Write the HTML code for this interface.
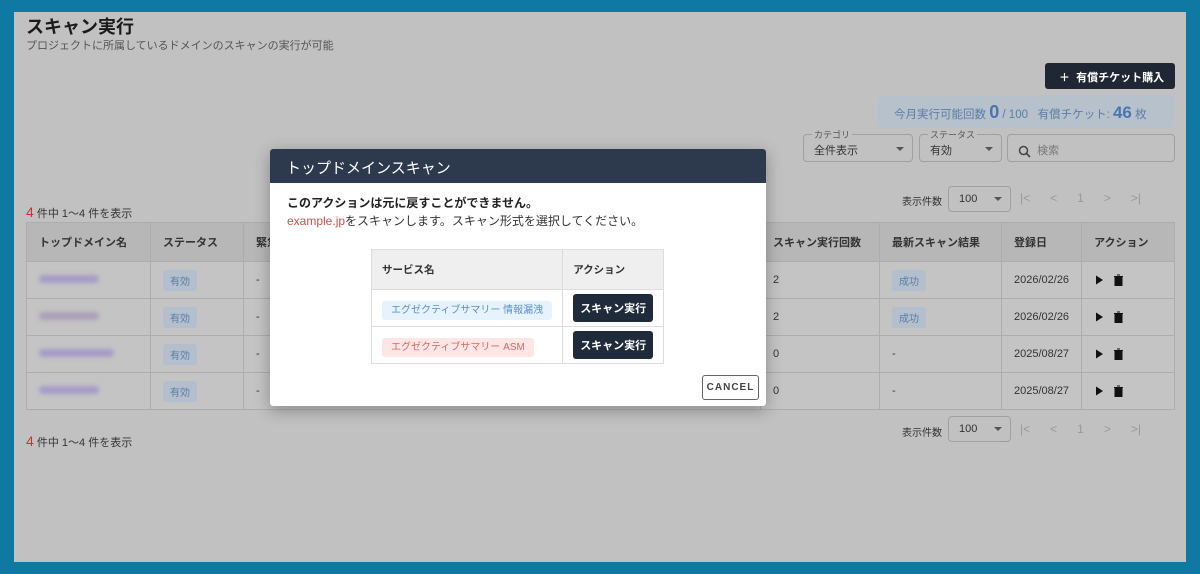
<!DOCTYPE html>
<html><head><meta charset="utf-8"><style>
*{box-sizing:border-box;margin:0;padding:0}
body{width:1200px;height:574px;background:#0f78a3;font-family:"Liberation Sans","Noto Sans CJK JP",sans-serif;position:relative;overflow:hidden;color:#222}
.pg{position:absolute;left:14px;top:12px;width:1172px;height:550px;background:#c1c1c1}
.a{position:absolute;white-space:nowrap}
.t{font-size:11px;color:#333}
table.m{position:absolute;left:26px;top:222px;border-collapse:collapse;font-size:11px}
table.m td{border:1px solid #adadad;height:37px;padding:0 12px;background:#c4c4c4;color:#333;white-space:nowrap}
table.m tr.h td{background:#b7b7b7;height:39px;font-weight:bold;color:#333}
.bd{display:inline-block;background:#b3bfcc;color:#5b7da6;padding:3px 7px;border-radius:3px;font-size:10px}
.bl{display:inline-block;width:60px;height:8px;background:#a59cc8;border-radius:4px;filter:blur(2px)}
.sel{position:absolute;border:1px solid #a0a0a0;border-radius:4px;height:28px;font-size:11px;color:#333;padding:7px 10px;white-space:nowrap}
.lg{position:absolute;top:-7px;left:8px;background:#c1c1c1;font-size:9px;color:#555;padding:0 2px}
.car{position:absolute;right:8px;top:12px;border:4px solid transparent;border-top:4px solid #555;border-bottom:0}
.pgn{position:absolute;font-size:12px;color:#999;white-space:nowrap}
.modal{position:absolute;left:270px;top:149px;width:496px;height:257px;background:#fff;border-radius:3px;box-shadow:0 4px 16px rgba(0,0,0,.3);overflow:hidden}
.mh{height:34px;background:#2d3a4e;color:#fff;font-size:15px;padding:8px 16px}
table.s{position:absolute;left:101px;top:100px;border-collapse:collapse;font-size:10.5px}
table.s td{border:1px solid #ddd;padding:0 10px;height:37px;white-space:nowrap}
table.s tr.h td{background:#efefef;height:40px;font-weight:bold;color:#333}
.btn{display:inline-block;background:#1f2a3a;color:#fff;font-weight:bold;font-size:11px;padding:6px 7px;border-radius:3px;white-space:nowrap}
.ic{vertical-align:middle}
</style></head><body>
<div class="pg"></div>
<div class="a" style="left:26px;top:13px;font-size:18px;font-weight:bold;color:#1a1a1a">スキャン実行</div>
<div class="a t" style="left:26px;top:37px;color:#555">プロジェクトに所属しているドメインのスキャンの実行が可能</div>
<div class="a" style="left:1045px;top:63px;width:130px;height:26px;background:#1f2735;border-radius:3px;color:#fff;font-size:11px;font-weight:bold;padding:6px 0 0 14px">＋&nbsp; 有償チケット購入</div>
<div class="a" style="left:877px;top:95px;width:298px;height:33px;background:#b6c1cc;border-radius:6px;color:#5b7da6;font-size:11.5px;padding:7px 0 0 17px">今月実行可能回数 <b style="font-size:18px;color:#4a76ad">0</b> / 100 &nbsp;&nbsp;有償チケット: <b style="font-size:17px;color:#4a76ad">46</b> 枚</div>
<div class="sel" style="left:803px;top:134px;width:110px">全件表示<span class="lg">カテゴリ</span><span class="car"></span></div>
<div class="sel" style="left:919px;top:134px;width:83px">有効<span class="lg">ステータス</span><span class="car"></span></div>
<div class="sel" style="left:1007px;top:134px;width:168px;color:#777"><svg class="ic" width="13" height="13" viewBox="0 0 13 13"><circle cx="5.5" cy="5.5" r="4" fill="none" stroke="#444" stroke-width="1.5"/><path d="M8.5 8.5L12 12" stroke="#444" stroke-width="1.6"/></svg>&nbsp; 検索</div>
<div class="a t" style="left:26px;top:204px"><span style="color:#c33;font-size:14px">4</span> 件中 1～4 件を表示</div>
<div class="a t" style="left:26px;top:433px"><span style="color:#c33;font-size:14px">4</span> 件中 1～4 件を表示</div>
<div class="a t" style="left:902px;top:193px;font-size:10px">表示件数</div>
<div class="sel" style="left:948px;top:186px;width:63px;height:26px;padding:6px 10px">100<span class="car" style="top:10px"></span></div>
<div class="pgn" style="left:1020px;top:191px">|&lt; &nbsp;&nbsp;&nbsp;&nbsp; &lt; &nbsp;&nbsp;&nbsp;&nbsp; 1 &nbsp;&nbsp;&nbsp;&nbsp; &gt; &nbsp;&nbsp;&nbsp;&nbsp; &gt;|</div>
<div class="a t" style="left:902px;top:424px;font-size:10px">表示件数</div>
<div class="sel" style="left:948px;top:416px;width:63px;height:26px;padding:6px 10px">100<span class="car" style="top:10px"></span></div>
<div class="pgn" style="left:1020px;top:422px">|&lt; &nbsp;&nbsp;&nbsp;&nbsp; &lt; &nbsp;&nbsp;&nbsp;&nbsp; 1 &nbsp;&nbsp;&nbsp;&nbsp; &gt; &nbsp;&nbsp;&nbsp;&nbsp; &gt;|</div>
<table class="m">
<tr class="h"><td style="width:124px">トップドメイン名</td><td style="width:93px">ステータス</td><td style="width:517px">緊急</td><td style="width:119px">スキャン実行回数</td><td style="width:122px">最新スキャン結果</td><td style="width:80px">登録日</td><td style="width:93px">アクション</td></tr>
<tr><td><span class="bl"></span></td><td><span class="bd">有効</span></td><td>-</td><td>2</td><td><span class="bd">成功</span></td><td>2026/02/26</td><td><svg class="ic" width="34" height="12"><path d="M2 1.5L9 6L2 10.5Z" fill="#111"/><path d="M20 2.5h9M23 1h3M21 3.5h7v8h-7z" fill="#111" stroke="#111" stroke-width="1"/></svg></td></tr>
<tr><td><span class="bl" style="background:#aa9fb8"></span></td><td><span class="bd">有効</span></td><td>-</td><td>2</td><td><span class="bd">成功</span></td><td>2026/02/26</td><td><svg class="ic" width="34" height="12"><path d="M2 1.5L9 6L2 10.5Z" fill="#111"/><path d="M20 2.5h9M23 1h3M21 3.5h7v8h-7z" fill="#111" stroke="#111" stroke-width="1"/></svg></td></tr>
<tr><td><span class="bl" style="width:75px"></span></td><td><span class="bd">有効</span></td><td>-</td><td>0</td><td>-</td><td>2025/08/27</td><td><svg class="ic" width="34" height="12"><path d="M2 1.5L9 6L2 10.5Z" fill="#111"/><path d="M20 2.5h9M23 1h3M21 3.5h7v8h-7z" fill="#111" stroke="#111" stroke-width="1"/></svg></td></tr>
<tr><td><span class="bl"></span></td><td><span class="bd">有効</span></td><td>-</td><td>0</td><td>-</td><td>2025/08/27</td><td><svg class="ic" width="34" height="12"><path d="M2 1.5L9 6L2 10.5Z" fill="#111"/><path d="M20 2.5h9M23 1h3M21 3.5h7v8h-7z" fill="#111" stroke="#111" stroke-width="1"/></svg></td></tr>
</table>
<div class="modal">
<div class="mh">トップドメインスキャン</div>
<div class="a" style="left:17px;top:45px;font-size:12px;font-weight:bold;color:#222">このアクションは元に戻すことができません。</div>
<div class="a" style="left:17px;top:63px;font-size:12px;color:#333"><span style="color:#c9514f">example.jp</span>をスキャンします。スキャン形式を選択してください。</div>
<table class="s">
<tr class="h"><td style="width:191px">サービス名</td><td style="width:100px">アクション</td></tr>
<tr><td><span style="background:#e6f3fc;color:#5c8fc4;padding:4px 9px;border-radius:3px;font-size:10px;white-space:nowrap">エグゼクティブサマリー 情報漏洩</span></td><td><span class="btn">スキャン実行</span></td></tr>
<tr><td><span style="background:#fde6e5;color:#d26a67;padding:4px 9px;border-radius:3px;font-size:10px;white-space:nowrap">エグゼクティブサマリー ASM</span></td><td><span class="btn">スキャン実行</span></td></tr>
</table>
<div class="a" style="left:432px;top:226px;width:57px;height:25px;border:1px solid #666;border-radius:3px;font-size:10px;font-weight:bold;color:#444;padding:6px 0;text-align:center;letter-spacing:1px">CANCEL</div>
</div>
</body></html>
